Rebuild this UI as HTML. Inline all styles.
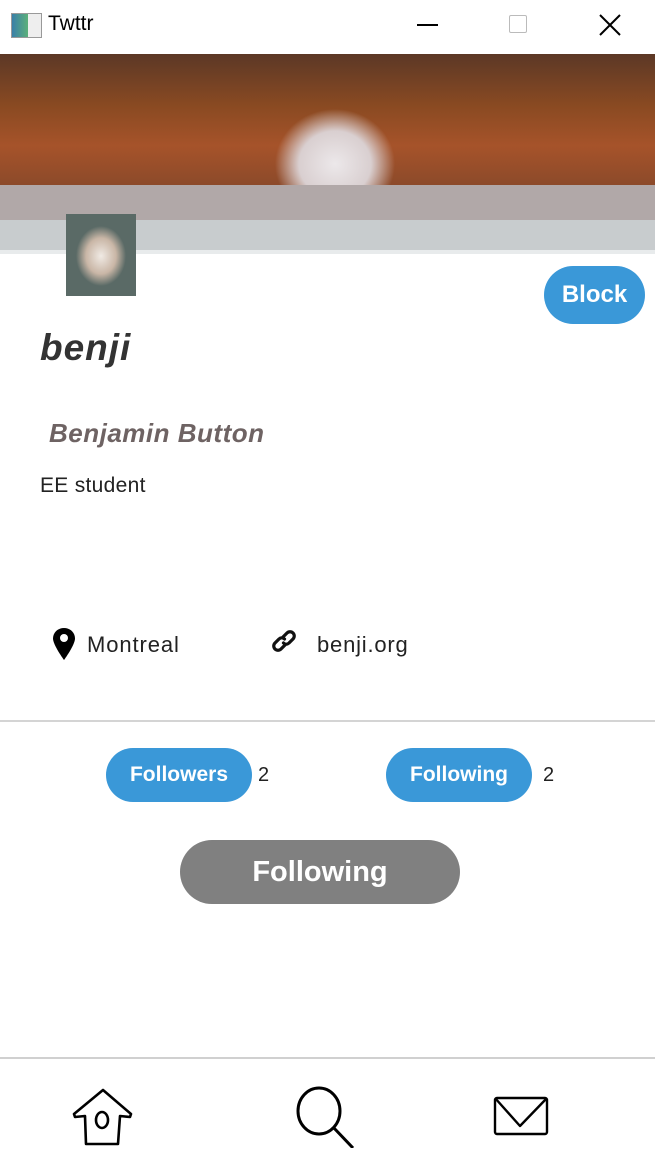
<!DOCTYPE html>
<html><head><meta charset="utf-8"><style>
*{margin:0;padding:0;box-sizing:border-box}
body{width:655px;height:1171px;background:#fff;position:relative;overflow:hidden;font-family:"Liberation Sans",sans-serif;color:#222}
.a{position:absolute}
.btn{position:absolute;background:#3a98d8;color:#fff;font-weight:bold;display:flex;align-items:center;justify-content:center}
</style></head><body>
<div class="a" style="left:11px;top:13px;width:31px;height:25px;border:1px solid #999;background:linear-gradient(90deg,#3a7fa8 0,#5bb07a 55%,#eee 56%)"></div>
<div class="a" style="left:48px;top:12px;font-size:21px;color:#000">Twttr</div>
<div class="a" style="left:417px;top:24px;width:21px;height:2px;background:#000"></div>
<div class="a" style="left:509px;top:15px;width:18px;height:18px;border:1.5px solid #bbb;border-radius:2px"></div>
<svg class="a" style="left:598px;top:13px" width="24" height="24"><path d="M2 2L22 22M22 2L2 22" stroke="#000" stroke-width="2"/></svg>

<div class="a" style="left:0;top:54px;width:655px;height:131px;background:radial-gradient(ellipse 60px 55px at 335px 110px,#ece8ea 0,#d9cfd0 60%,rgba(0,0,0,0) 100%),linear-gradient(180deg,#5c3826 0,#8a4a22 40%,#a6532a 70%,#8c4a2a 100%)"></div>
<div class="a" style="left:0;top:185px;width:655px;height:35px;background:#b1a8a8"></div>
<div class="a" style="left:0;top:220px;width:655px;height:30px;background:#c8ccce"></div>
<div class="a" style="left:0;top:250px;width:655px;height:4px;background:#e8ebec"></div>
<div class="a" style="left:66px;top:214px;width:70px;height:82px;background:radial-gradient(ellipse 25px 30px at 35px 42px,#f0eae4 0,#c9b6a6 60%,#5a6a66 100%)"></div>

<div class="btn" style="left:544px;top:266px;width:101px;height:58px;border-radius:29px;font-size:24px">Block</div>
<div class="a" style="left:40px;top:327px;font-size:37px;font-weight:bold;font-style:italic;color:#333;letter-spacing:1px">benji</div>
<div class="a" style="left:49px;top:418px;font-size:26px;font-weight:bold;font-style:italic;color:#6e6363;letter-spacing:0.5px">Benjamin Button</div>
<div class="a" style="left:40px;top:474px;font-size:21px;color:#222;letter-spacing:0.3px">EE student</div>

<svg class="a" style="left:52px;top:627px" width="24" height="34" viewBox="0 0 24 34"><path d="M12 1C5.5 1 1 5.8 1 11.5C1 18 12 33 12 33S23 18 23 11.5C23 5.8 18.5 1 12 1Z" fill="#000"/><circle cx="12" cy="11" r="4" fill="#fff"/></svg>
<div class="a" style="left:87px;top:632px;font-size:22px;color:#222;letter-spacing:0.9px">Montreal</div>
<svg class="a" style="left:270px;top:628px" width="28" height="26" viewBox="0 0 28 26"><g fill="none" stroke="#111" stroke-width="3.2" stroke-linecap="round"><path d="M13 9L17 5A4 4 0 0 1 23 11L19 15A4 4 0 0 1 13.5 15"/><path d="M15 17L11 21A4 4 0 0 1 5 15L9 11A4 4 0 0 1 14.5 11"/></g></svg>
<div class="a" style="left:317px;top:632px;font-size:22px;color:#222;letter-spacing:0.8px">benji.org</div>

<div class="a" style="left:0;top:720px;width:655px;height:2px;background:#d4d4d4"></div>
<div class="btn" style="left:106px;top:748px;width:146px;height:54px;border-radius:27px;font-size:21px">Followers</div>
<div class="a" style="left:258px;top:764px;font-size:20px">2</div>
<div class="btn" style="left:386px;top:748px;width:146px;height:54px;border-radius:27px;font-size:21px">Following</div>
<div class="a" style="left:543px;top:764px;font-size:20px">2</div>
<div class="btn" style="left:180px;top:840px;width:280px;height:64px;border-radius:32px;font-size:29px;background:#808080">Following</div>

<div class="a" style="left:0;top:1057px;width:655px;height:2px;background:#d0d0d0"></div>
<svg class="a" style="left:70px;top:1086px" width="66" height="62" viewBox="0 0 66 62"><g fill="none" stroke="#000" stroke-width="2.6" stroke-linejoin="round"><path d="M33 4L4 28L5 31L15 30L16 58L48 58L50 30L60 31L61 28Z"/><ellipse cx="32" cy="34" rx="6" ry="8"/></g></svg>
<svg class="a" style="left:295px;top:1086px" width="64" height="62" viewBox="0 0 64 62"><g fill="none" stroke="#000" stroke-width="3"><ellipse cx="24" cy="25" rx="21" ry="23"/><path d="M38 41L58 62"/></g></svg>
<svg class="a" style="left:493px;top:1096px" width="56" height="40" viewBox="0 0 56 40"><g fill="none" stroke="#000" stroke-width="2.4" stroke-linejoin="round"><rect x="2" y="2" width="52" height="36" rx="2"/><path d="M2 2L27 30L54 2"/></g></svg>
</body></html>
